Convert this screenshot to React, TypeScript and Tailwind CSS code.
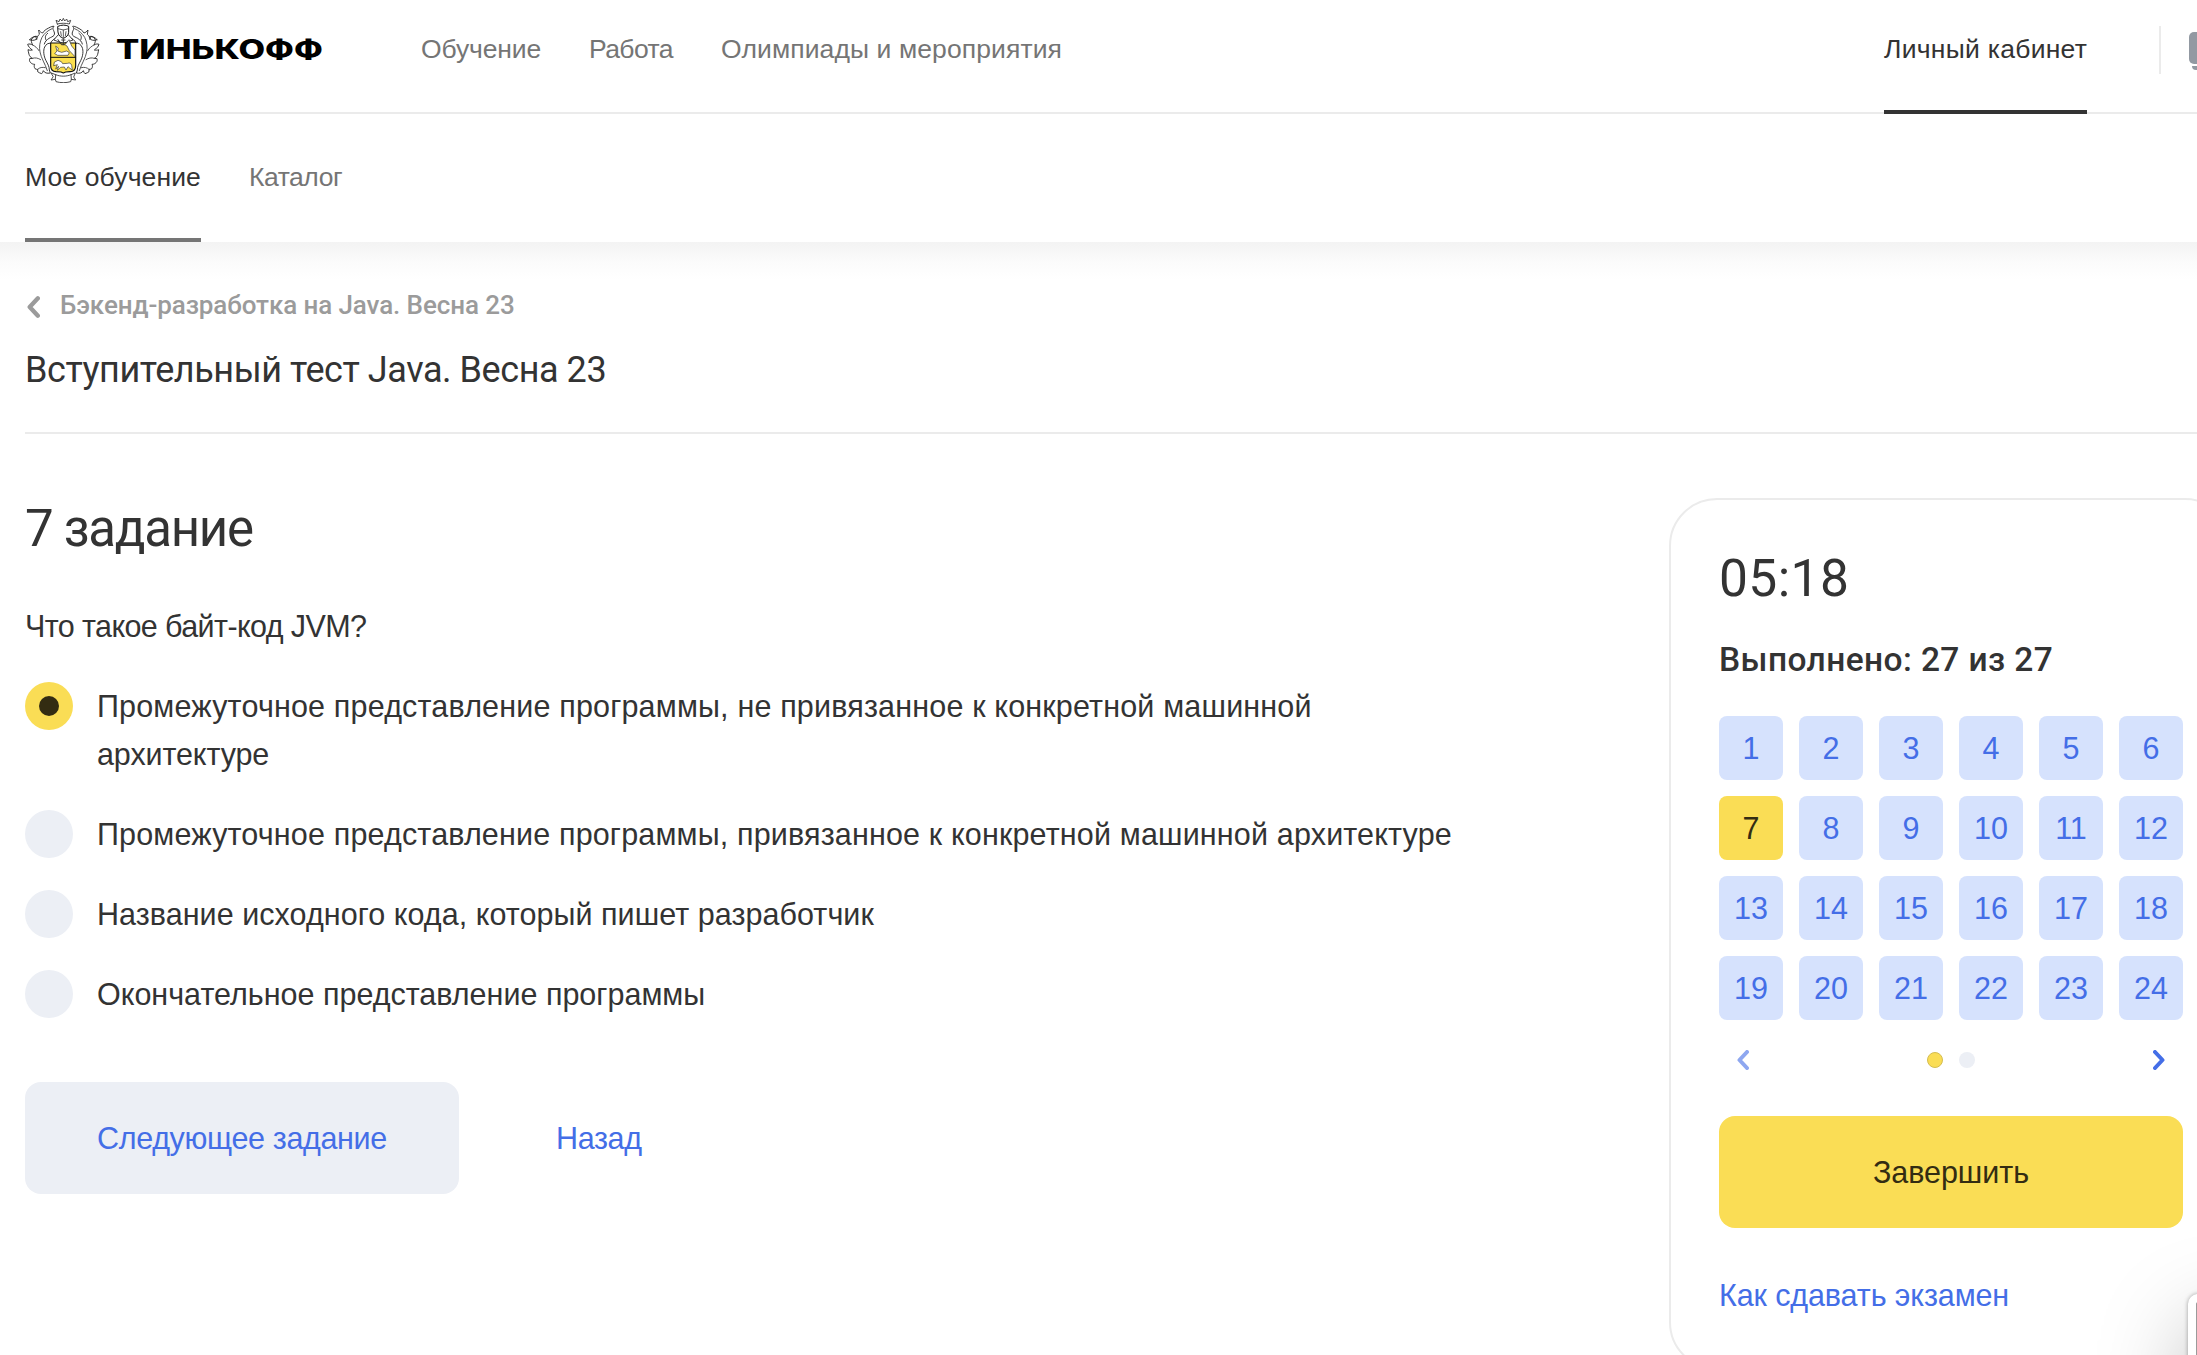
import type { ReactNode } from "react";

const LEAF =
  "M152 130 C143 128 137 133 133 141 C128 152 130 168 137 182 C142 192 147 199 147 210 L150 219 C140 221 133 219 129 212 C127 216 127 219 124 221 C119 219 115 218 112 215 L112 208 C109 208 107 208 104 206 C101 201 101 197 103 193 C98 193 94 191 91 188 C87 184 87 180 88 176 L96 175 C91 172 87 168 86 163 C84 157 84 153 83 149 C88 151 92 151 96 150 C90 146 84 140 82 133 C86 131 92 132 97 135 C93 127 92 122 94 117 C97 113 101 110 106 109 L109 119 C110 112 112 107 117 103 L115 90 C119 94 122 98 127 99 C131 92 137 88 145 84 C152 80 158 78 161 79 C157 83 157 87 160 92 C162 97 164 101 161 106 C158 110 151 112 146 115 C139 120 134 124 132 132";

function HalfWreath() {
  return (
    <g fill="none" stroke="#222" strokeWidth="2.7" strokeLinejoin="round" strokeLinecap="round">
      <path d={LEAF} fill="#fff" />
      <path d="M155 86 C142 92 132 100 125 112 C118 126 116 142 119 156 C123 176 134 190 141 212" stroke="#444" />
      <path d="M97 135 C104 138 111 144 116 152 M96 175 C105 172 113 174 121 179 M112 208 C118 202 126 201 135 203" stroke="#444" />
      <path d="M88 119 C94 112 102 108 110 109 M88 119 C93 122 100 122 106 119" />
      <path d="M137 120 C133 112 135 105 142 100" />
      <path d="M172 113 C162 115 155 120 151 129" />
    </g>
  );
}

function Emblem() {
  return (
    <svg className="h-[65px] w-[73px] shrink-0" viewBox="80 54 219 195" aria-hidden="true">
      <HalfWreath />
      <g transform="translate(378 0) scale(-1 1)">
        <HalfWreath />
      </g>
      <g fill="#fff" stroke="#333" strokeWidth="2.6" strokeLinejoin="round" strokeLinecap="round">
        <path d="M171 72 L167 61 L176 65 L179 57 L185 63 L189 55 L193 63 L199 57 L202 65 L211 61 L207 72 C196 69 182 69 171 72 Z" />
        <path d="M153 219 L166 224 C180 230 198 230 212 224 L225 219 L220 231 L226 240 L213 238 L211 245 C197 249 181 249 167 245 L165 238 L152 240 L158 231 Z" />
        <path d="M166 224 L165 238 M212 224 L213 238" fill="none" />
        <path d="M174 104 L160 120 L189 130 L218 120 L204 104" stroke="#222" />
        <path d="M173 79 C182 74 196 74 205 79 L205 97 C204 106 198 112 189 115 C180 112 174 106 173 97 Z" stroke="#111" strokeWidth="3" />
        <path d="M173 86 L189 90 L205 86 M189 90 L189 114 M181 95 L183 108 M197 95 L195 108" fill="none" stroke="#444" />
        <path d="M151 129 H226 V197 C226 209 221 214 210 215 L196 216 L189 219 L182 216 L167 215 C156 214 151 209 151 197 Z" fill="#fbdf4f" stroke="#111" strokeWidth="3.5" />
        <path d="M173 119 L184 134 H194 L206 119 L214 138 L224 150 V170 L207 152 L200 138 L193 134 H184 Z" strokeWidth="2" />
        <path d="M151 172 H226" stroke="#111" strokeWidth="3" />
        <path d="M189 119 V134 M184 120 H194" strokeWidth="3" />
        <path d="M167 139 L174 144 L172 153 L184 157 L199 153 L207 158 L203 166 L172 166 L163 161 L169 154 Z" strokeWidth="2" />
        <path d="M163 186 L173 181 L183 185 L187 191 L202 190 C208 187 212 190 214 196 L216 210 L209 205 L203 200 L197 210 L192 201 L181 202 L171 211 L175 199 L166 207 L171 194 L161 197 Z" strokeWidth="2" />
      </g>
    </svg>
  );
}

function Chevron({ dir, className }: { dir: "left" | "right"; className: string }) {
  return (
    <svg className={className} viewBox="0 0 12 20" fill="none" stroke="currentColor" strokeWidth="4" strokeLinecap="round" strokeLinejoin="round" aria-hidden="true">
      <path d={dir === "left" ? "M10 2 L2.5 10 L10 18" : "M2 2 L9.5 10 L2 18"} />
    </svg>
  );
}

function Option({ checked = false, className, children }: { checked?: boolean; className: string; children: ReactNode }) {
  return (
    <label className="flex gap-6">
      <span className={`flex size-12 shrink-0 items-center justify-center rounded-full ${checked ? "bg-[#fadd55]" : "bg-[#eceff5]"}`}>
        {checked && <span className="size-5 rounded-full bg-[#332c12]" />}
      </span>
      <span className={`leading-[48px] whitespace-nowrap ${className}`}>{children}</span>
    </label>
  );
}

const numbers = Array.from({ length: 24 }, (_, i) => i + 1);

export default function App() {
  return (
    <div className="relative h-[1355px] w-[2197px] overflow-hidden bg-white font-['Liberation_Sans',Arial,sans-serif] text-[30.5px] text-[#333]">
      <header className="h-[242px] bg-white pl-[25px]">
        <div className="flex h-[114px] border-b-2 border-[#ebebeb] text-[26.5px] leading-[98px] whitespace-nowrap text-[#757575]">
          <a className="flex w-[396px] shrink-0 pt-[18px] pl-[2px]">
            <Emblem />
            <span className="mt-[13px] ml-[16px] h-9 origin-left scale-x-[1.3] font-['Inter',sans-serif] text-[26.5px] leading-9 font-extrabold text-black">ТИНЬКОФФ</span>
          </a>
          <a className="w-[168px] shrink-0 tracking-[-0.15px]">Обучение</a>
          <a className="w-[132px] shrink-0 tracking-[-0.6px]">Работа</a>
          <a className="tracking-[0.1px]">Олимпиады и мероприятия</a>
          <a className="-mb-[2px] ml-auto w-[203px] border-b-4 border-[#333] tracking-[0.27px] text-[#333]">Личный кабинет</a>
          <div className="mt-[26px] ml-[72px] h-12 w-[2px] bg-[#ebebeb]" />
          <div className="mt-8 ml-7 w-2">
            <div className="h-8 rounded-l-[5px] bg-[#9299a2]" />
            <div className="mt-[2px] ml-[3px] h-1 rounded-bl-[4px] bg-[#9299a2]" />
          </div>
        </div>
        <nav className="flex h-32 gap-12 text-[26.5px] leading-[126px] whitespace-nowrap text-[#757575]">
          <a className="w-[176px] border-b-4 border-[#757575] tracking-[0.12px] text-[#333]">Мое обучение</a>
          <a className="tracking-[-0.45px]">Каталог</a>
        </nav>
      </header>

      <main className="bg-linear-to-b from-[#f3f3f3] via-[#fbfbfb] to-white bg-[length:100%_38px] bg-no-repeat pl-[25px]">
        <div className="h-[192px] border-b-2 border-[#ebebeb] pt-[43px] font-['Roboto',sans-serif]">
          <a className="flex h-10 items-center text-[26px] leading-10 font-medium tracking-[-0.1px] text-[#9b9b9b]">
            <Chevron dir="left" className="mt-[4px] mr-[20px] ml-[2px] h-6 w-[13px]" />
            Бэкенд-разработка на Java. Весна 23
          </a>
          <h1 className="mt-[21px] text-[36px] leading-12 tracking-[-0.44px]">Вступительный тест Java. Весна 23</h1>
        </div>

        <div className="flex items-start">
          <section className="w-[1644px] shrink-0 pt-16">
            <h2 className="mt-px font-['Roboto',sans-serif] text-[51px] leading-[60px] tracking-[-1.3px]">7 задание</h2>
            <p className="mt-[43px] leading-[48px] tracking-[-0.6px]">Что такое байт-код JVM?</p>
            <div className="mt-[32px] flex flex-col gap-8">
              <Option checked className="tracking-[0.17px]">
                Промежуточное представление программы, не привязанное к конкретной машинной
                <br />
                <span className="tracking-[-0.1px]">архитектуре</span>
              </Option>
              <Option className="tracking-[0.16px]">Промежуточное представление программы, привязанное к конкретной машинной архитектуре</Option>
              <Option className="tracking-[0.05px]">Название исходного кода, который пишет разработчик</Option>
              <Option className="tracking-[0px]">Окончательное представление программы</Option>
            </div>
            <div className="mt-16 flex leading-[112px] tracking-[-0.35px] text-[#446ee7]">
              <button className="h-28 w-[434px] rounded-2xl bg-[#eceff5]">Следующее задание</button>
              <button className="ml-[97px] h-28">Назад</button>
            </div>
          </section>

          <aside className="mt-16 h-[872px] w-[564px] shrink-0 rounded-[48px] border-2 border-[#ebebeb] px-12 pt-[49px]">
            <div className="font-['Roboto',sans-serif] text-[51.5px] leading-[60px] tracking-[0.4px]">05:18</div>
            <div className="mt-[27px] font-['Roboto',sans-serif] text-[33.5px] leading-12 font-medium tracking-[0.4px]">Выполнено: 27 из 27</div>
            <div className="mt-[32px] grid grid-cols-6 gap-4 text-[#446ee7]">
              {numbers.map((n) => (
                <button
                  key={n}
                  className={`h-16 rounded-lg text-center leading-[64px] ${n === 7 ? "bg-[#fadd55] text-[#332c12]" : "bg-[#d6e2fd]"}`}
                >
                  {n}
                </button>
              ))}
            </div>
            <div className="mt-[30px] flex h-5 items-center justify-between px-[18px] text-[#446ee7]">
              <Chevron dir="left" className="h-5 w-3 opacity-60" />
              <div className="flex gap-4">
                <span className="size-4 rounded-full border border-[#d5bd50] bg-[#fadd55]" />
                <span className="size-4 rounded-full bg-[#eceff5]" />
              </div>
              <Chevron dir="right" className="h-5 w-3" />
            </div>
            <button className="mt-[46px] h-28 w-full rounded-2xl bg-[#fadd55] leading-[112px] tracking-[-0.05px] text-[#332c12]">Завершить</button>
            <a className="mt-[43px] block leading-12 tracking-[-0.1px] text-[#446ee7]">Как сдавать экзамен</a>
          </aside>
        </div>
      </main>

      <div className="absolute top-[1294px] left-[2188px] h-[400px] w-[400px] rounded-[10px] border-8 border-white bg-[#9b9b9b] shadow-[0_0_4px_rgba(0,0,0,0.35),0_30px_90px_rgba(0,0,0,0.26)]" />
    </div>
  );
}
